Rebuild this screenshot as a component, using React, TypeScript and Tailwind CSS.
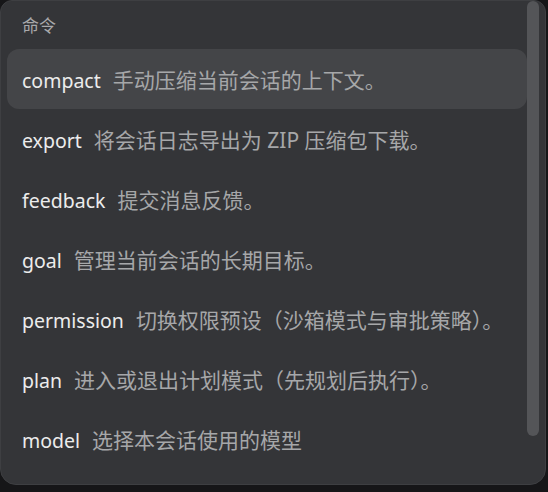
import React from "react";

const commands = [
  { name: "compact", desc: "手动压缩当前会话的上下文。" },
  { name: "export", desc: "将会话日志导出为 ZIP 压缩包下载。" },
  { name: "feedback", desc: "提交消息反馈。" },
  { name: "goal", desc: "管理当前会话的长期目标。" },
  { name: "permission", desc: "切换权限预设（沙箱模式与审批策略）。" },
  { name: "plan", desc: "进入或退出计划模式（先规划后执行）。" },
  { name: "model", desc: "选择本会话使用的模型" },
];

export default function App() {
  // selected row
  const active = "compact";

  return (
    <div
      className="w-[548px] h-[492px] bg-[#161618] overflow-hidden"
      style={{ fontFamily: '"Noto Sans", "Noto Sans CJK SC", sans-serif' }}
    >
      {/* command panel */}
      <div className="w-[546px] h-[485px] flex rounded-[12px] rounded-b-[16px] bg-[#343538] border border-[#3e3f42] overflow-hidden">
        {/* list */}
        <div className="flex-1 pl-[6px]">
          {/* header */}
          <div className="h-[48px] pt-[1px] px-[15px] flex items-center text-[17px] text-[#a9a9ab]">
            命令
          </div>
          {/* rows */}
          {commands.map((cmd) => (
            <div
              key={cmd.name}
              className={
                "h-[60px] px-[15px] pt-[3px] flex items-center gap-[12px] rounded-[12px] " +
                (cmd.name == active ? "bg-[#444548]" : "")
              }
            >
              <span className="text-[19.5px] text-[#ececec]">{cmd.name}</span>
              <span className="text-[21px] text-[#a6a7a9] whitespace-nowrap">
                {cmd.desc}
              </span>
            </div>
          ))}
        </div>
        {/* scrollbar */}
        <div className="w-[12px] h-[435px] mr-[6px] rounded-full bg-[#545558]" />
      </div>
    </div>
  );
}
